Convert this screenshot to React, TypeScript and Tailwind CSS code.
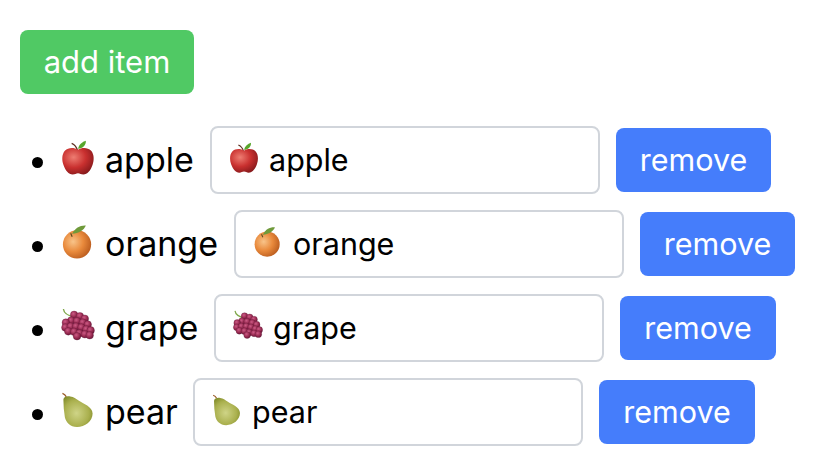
const font = "[font-family:Inter,'Liberation_Sans',Arial,sans-serif]";

const gradients = (
  <defs>
    <radialGradient id="appleFill" cx="0.36" cy="0.35" r="0.78">
      <stop offset="0" stopColor="#ee7d72" />
      <stop offset="0.5" stopColor="#c9302f" />
      <stop offset="1" stopColor="#7a1518" />
    </radialGradient>
    <radialGradient id="orangeFill" cx="0.36" cy="0.4" r="0.72">
      <stop offset="0" stopColor="#f8c48a" />
      <stop offset="0.5" stopColor="#e98a3c" />
      <stop offset="1" stopColor="#b4561a" />
    </radialGradient>
    <radialGradient id="pearFill" cx="0.45" cy="0.55" r="0.65">
      <stop offset="0" stopColor="#cfd487" />
      <stop offset="0.65" stopColor="#aab04e" />
      <stop offset="1" stopColor="#7f8a28" />
    </radialGradient>
    <radialGradient id="grapeFill" cx="0.4" cy="0.35" r="0.7">
      <stop offset="0" stopColor="#cc5a85" />
      <stop offset="0.6" stopColor="#96294f" />
      <stop offset="1" stopColor="#651638" />
    </radialGradient>
  </defs>
);

const Apple = () => (
  <>
    <path d="M17.5 11 C16.5 7 15 5 11.5 3.5" stroke="#5b2c1e" strokeWidth="1.3" fill="none" />
    <path d="M18 9 C19 4.5 22.5 2 26 0.8 C26.5 5 23 9 18 9 Z" fill="#58a62c" />
    <path d="M18 10 C22 7.5 28 7.5 31.5 11 C34.5 14.5 34.8 20 33 25.5 C31 31.5 27.5 35.5 23.5 35.5 C21 35.5 20 34.2 18 34.2 C16 34.2 15 35.5 12.5 35.5 C8.5 35.5 5 31.5 3 25.5 C1.2 20 1.5 14.5 4.5 11 C8 7.5 14 7.5 18 10 Z" fill="url(#appleFill)" />
  </>
);

const Orange = () => (
  <>
    <circle cx="17" cy="21" r="14.5" fill="url(#orangeFill)" />
    <path d="M10.5 9.5 L12 13" stroke="#5b4a1e" strokeWidth="1.2" />
    <path d="M12 10 C15 4 20 1.2 26 1.5 C24.5 6 18.5 10 12 10 Z" fill="#6f9a3a" />
  </>
);

const grapes = [
  [14, 7], [20, 8.5], [25, 11], [11, 13], [17, 13.5], [23, 15], [28, 17],
  [5.5, 15], [5, 20], [10.5, 19], [16, 19], [21.5, 20], [26.5, 22], [31, 23],
  [8, 24], [14, 24.5], [19.5, 26], [25, 27], [30, 28], [17, 29],
];

const Grape = () => (
  <>
    <path d="M3 1 C3.5 5 8 8 14 9" stroke="#7fa84a" strokeWidth="1.4" fill="none" />
    {grapes.map(([x, y]) => (
      <circle key={`${x}-${y}`} cx={x} cy={y} r="3.9" fill="url(#grapeFill)" stroke="#5a1233" strokeWidth="0.3" />
    ))}
  </>
);

const Pear = () => (
  <>
    <path d="M2 1.5 C3.5 2 5 3 6 5" stroke="#9a5a26" strokeWidth="1.3" fill="none" />
    <path d="M3 8 C3 5 7 4 10 4.5 C14 5 15.5 6.5 19 9 C23 12 33 15 33 22 C33 30 25 36 17 36 C10 36 5.5 31 4.5 26 C3.5 20 3 14 3 8 Z" fill="url(#pearFill)" />
  </>
);

const Fruit = ({ name, size }: { name: string; size: number }) => (
  <svg width={size} height={size} viewBox="0 0 36 37" className="-mt-1 -ml-px shrink-0">
    {gradients}
    {name === "apple" && <Apple />}
    {name === "orange" && <Orange />}
    {name === "grape" && <Grape />}
    {name === "pear" && <Pear />}
  </svg>
);

const items = [
  { name: "apple", label: "w-[88px]", remove: "w-[155px]" },
  { name: "orange", label: "w-[112px]", remove: "w-[155px]" },
  { name: "grape", label: "w-[92px]", remove: "w-[156px]" },
  { name: "pear", label: "w-[71px]", remove: "w-[156px]" },
];

export default function App() {
  return (
    <div className={`min-h-[470px] bg-white pt-[30px] pl-5 text-black ${font}`}>
      <button className="h-16 w-[174px] rounded-lg bg-[#50c964] text-[31px] text-white">add item</button>
      <ul className="mt-8 list-disc pl-[41px]">
        {items.map(({ name, label, remove }) => (
          <li key={name} className="mb-4 h-[68px] text-[34px] leading-[72px]">
            <div className="inline-flex h-[68px] items-center align-top">
              <Fruit name={name} size={36} />
              <span className={`ml-[9px] whitespace-nowrap ${label}`}>{name}</span>
              <div className="ml-[17px] flex h-[68px] w-[390px] items-center rounded-lg border-2 border-[#d1d5db] pl-[17px] text-[30.5px] leading-none">
                <Fruit name={name} size={32} />
                <span className="ml-[9px]">{name}</span>
              </div>
              <button className={`ml-4 h-16 rounded-lg bg-[#457dfb] text-[30.5px] leading-none text-white ${remove}`}>remove</button>
            </div>
          </li>
        ))}
      </ul>
    </div>
  );
}
